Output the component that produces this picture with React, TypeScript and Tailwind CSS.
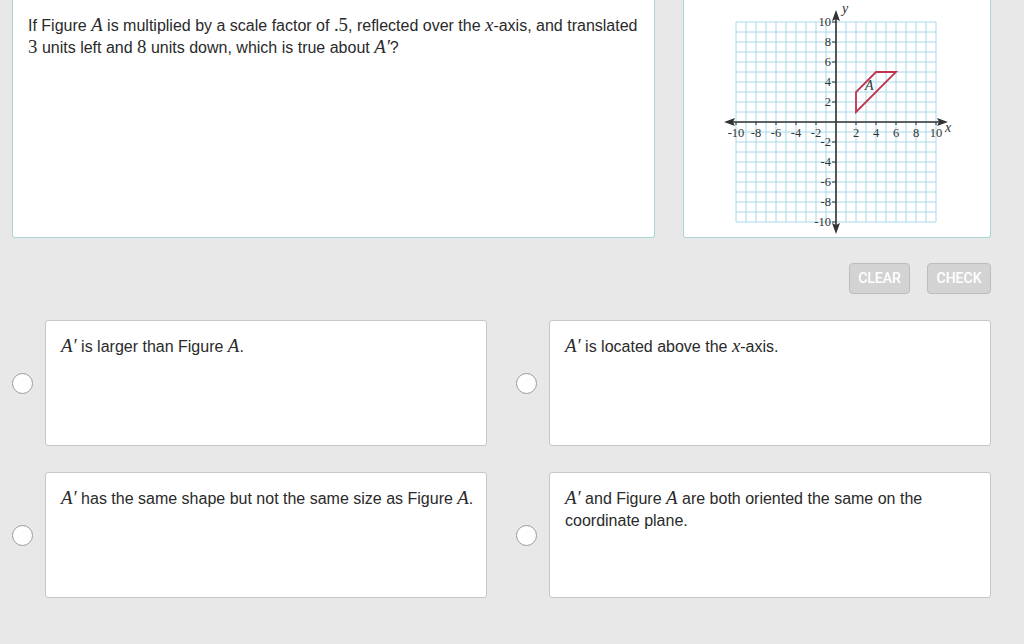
import React from "react";

const M = ({ children }: { children: React.ReactNode }) => (
  <span className="font-['Liberation_Serif',serif] italic text-[1.18em] leading-none">{children}</span>
);
const N = ({ children }: { children: React.ReactNode }) => (
  <span className="font-['Liberation_Serif',serif] text-[1.18em] leading-none">{children}</span>
);
const Ap = () => (
  <span className="font-['Liberation_Serif',serif] italic text-[1.18em] leading-none">A′</span>
);

function Graph() {
  const ox = 152;
  const oy = 122;
  const u = 10;
  const lines: React.ReactNode[] = [];
  for (let i = -10; i <= 10; i++) {
    lines.push(
      <line key={"v" + i} x1={ox + i * u} y1={oy - 100} x2={ox + i * u} y2={oy + 100} stroke="#a9d8ea" strokeWidth={1} />
    );
    lines.push(
      <line key={"h" + i} x1={ox - 100} y1={oy + i * u} x2={ox + 100} y2={oy + i * u} stroke="#a9d8ea" strokeWidth={1} />
    );
  }
  const labels: React.ReactNode[] = [];
  for (let i = -10; i <= 10; i += 2) {
    if (i === 0) continue;
    labels.push(
      <text key={"xl" + i} x={ox + i * u} y={oy + 15} fontSize={12.5} textAnchor="middle" fill="#333" fontFamily="Liberation Serif, serif">
        {i < 0 ? "-" + -i : i}
      </text>
    );
    labels.push(
      <text key={"yl" + i} x={ox - 5} y={oy - i * u + 4} fontSize={12.5} textAnchor="end" fill="#333" fontFamily="Liberation Serif, serif">
        {i < 0 ? "-" + -i : i}
      </text>
    );
    labels.push(
      <line key={"yt" + i} x1={ox - 4} y1={oy - i * u} x2={ox} y2={oy - i * u} stroke="#333" strokeWidth={1} />
    );
    labels.push(
      <line key={"xt" + i} x1={ox + i * u} y1={oy} x2={ox + i * u} y2={oy + 3} stroke="#333" strokeWidth={1} />
    );
  }
  return (
    <svg width={306} height={238} viewBox="0 0 306 238" className="block">
      {lines}
      <line x1={ox - 106} y1={oy} x2={ox + 106} y2={oy} stroke="#333" strokeWidth={1.6} />
      <line x1={ox} y1={oy - 108} x2={ox} y2={oy + 106} stroke="#333" strokeWidth={1.6} />
      <polygon points={`${ox - 112},${oy} ${ox - 101},${oy - 4} ${ox - 103},${oy} ${ox - 101},${oy + 4}`} fill="#333" />
      <polygon points={`${ox + 112},${oy} ${ox + 101},${oy - 4} ${ox + 103},${oy} ${ox + 101},${oy + 4}`} fill="#333" />
      <polygon points={`${ox},${oy - 112} ${ox - 4},${oy - 101} ${ox},${oy - 103} ${ox + 4},${oy - 101}`} fill="#333" />
      <polygon points={`${ox},${oy + 112} ${ox - 4},${oy + 101} ${ox},${oy + 103} ${ox + 4},${oy + 101}`} fill="#333" />
      {labels}
      <text x={ox + 109} y={oy + 10} fontSize={14} fontStyle="italic" fill="#333" fontFamily="Liberation Serif, serif">x</text>
      <text x={ox + 6} y={oy - 109} fontSize={14} fontStyle="italic" fill="#333" fontFamily="Liberation Serif, serif">y</text>
      <polygon
        points={`${ox + 2 * u},${oy - 1 * u} ${ox + 2 * u},${oy - 3 * u} ${ox + 4 * u},${oy - 5 * u} ${ox + 6 * u},${oy - 5 * u}`}
        fill="none"
        stroke="#c0344d"
        strokeWidth={1.8}
        strokeLinejoin="miter"
      />
      <text x={ox + 29} y={oy - 32} fontSize={14} fontStyle="italic" fill="#333" fontFamily="Liberation Serif, serif">A</text>
    </svg>
  );
}

function Answer({ children }: { children: React.ReactNode }) {
  return (
    <div className="flex items-center gap-3">
      <div className="w-[21px] h-[21px] shrink-0 rounded-full border border-[#9a9a9a] bg-white" />
      <div className="flex-1 h-[126px] bg-white border border-[#c6c6c6] rounded-[3px] pl-[15px] pr-[6px] pt-[15px] text-[16px] leading-[22px] text-[#2a2a2a]">
        {children}
      </div>
    </div>
  );
}

export default function App() {
  return (
    <div className="w-[1024px] h-[644px] overflow-hidden bg-[#e8e8e8] font-['Liberation_Sans',Arial,sans-serif] pl-[12px] pr-[33px]">
      <div className="flex gap-[28px] h-[238px]">
        <div className="w-[643px] bg-white border border-t-0 border-[#aad6d9] rounded-b-[3px] pl-[15px] pr-[10px] pt-[15px] text-[16px] leading-[22px] text-[#2a2a2a]">
          If Figure <M>A</M> is multiplied by a scale factor of <N>.5</N>, reflected over the <M>x</M>-axis, and translated{" "}
          <N>3</N> units left and <N>8</N> units down, which is true about <Ap />?
        </div>
        <div className="flex-1 bg-white border border-t-0 border-[#aad6d9] rounded-b-[3px] overflow-hidden">
          <Graph />
        </div>
      </div>
      <div className="flex justify-end gap-[17px] mt-[25px] h-[31px]">
        <div className="w-[61px] h-[31px] rounded-[4px] bg-[#d3d3d3] border border-[#bdbdbd] text-white text-[14px] font-['Roboto',sans-serif] font-medium flex items-center justify-center">CLEAR</div>
        <div className="w-[64px] h-[31px] rounded-[4px] bg-[#d3d3d3] border border-[#bdbdbd] text-white text-[14px] font-['Roboto',sans-serif] font-medium flex items-center justify-center">CHECK</div>
      </div>
      <div className="grid grid-cols-[475px_475px] gap-x-[29px] gap-y-[26px] mt-[26px]">
        <Answer>
          <Ap /> is larger than Figure <M>A</M>.
        </Answer>
        <Answer>
          <Ap /> is located above the <M>x</M>-axis.
        </Answer>
        <Answer>
          <Ap /> has the same shape but not the same size as Figure <M>A</M>.
        </Answer>
        <Answer>
          <Ap /> and Figure <M>A</M> are both oriented the same on the coordinate plane.
        </Answer>
      </div>
    </div>
  );
}
